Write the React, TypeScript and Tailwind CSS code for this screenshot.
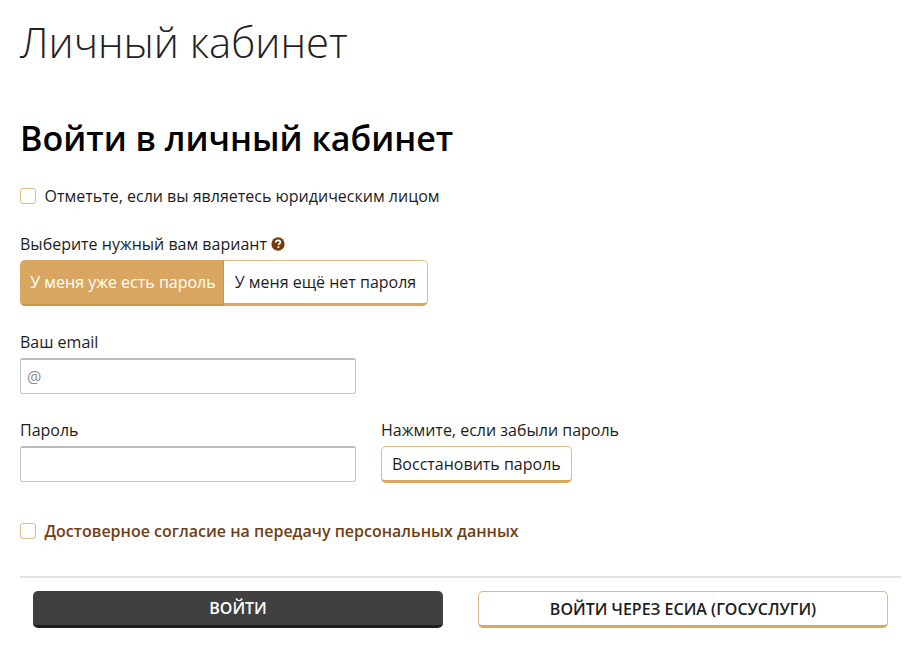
import { useState } from "react";

function Box() {
  return (
    <span className="w-4 h-4 shrink-0 rounded-[3px] border border-[#e0b987] bg-white" />
  );
}

export default function App() {
  const [mode] = useState("has");

  return (
    <div className="w-[923px] h-[660px] overflow-hidden bg-white px-5 font-['Open_Sans','Noto_Sans',sans-serif] text-base text-[#1d1d1d]">
      <h1 className="pt-[13px] text-[41.9px] leading-[57px] font-light text-[#222]">
        Личный кабинет
      </h1>
      <h2 className="mt-[45px] text-[34px] leading-[46px] font-semibold text-black">
        Войти в личный кабинет
      </h2>

      <label className="mt-[24px] flex items-center gap-[8.5px] leading-[22px]">
        <Box />
        Отметьте, если вы являетесь юридическим лицом
      </label>

      <div className="mt-[26px] flex items-center gap-1 leading-[22px]">
        Выберите нужный вам вариант
        <svg viewBox="0 0 16 16" className="w-[14px] h-[14px]">
          <circle cx="8" cy="8" r="7.6" fill="#763c0e" />
          <path
            d="M5.4 6.3c.1-1.6 1.2-2.4 2.7-2.4 1.5 0 2.6.9 2.6 2.1 0 1.8-2.1 1.7-2.1 3.2"
            fill="none"
            stroke="#fff"
            strokeWidth="1.9"
          />
          <rect x="7.5" y="10.5" width="2" height="2" fill="#fff" />
        </svg>
      </div>

      <div className="mt-[5px] flex w-[408px] h-[46px] rounded-[5px] overflow-hidden">
        <div
          className={`w-[204px] pl-[3px] flex items-center justify-center border-b-[2px] border-r border-[#c9924b] ${mode === "has" ? "bg-[#d9a662] text-white" : ""}`}
        >
          У меня уже есть пароль
        </div>
        <div className="flex-1 flex items-center justify-center border border-b-[3px] border-l-0 border-[#e0b987] border-b-[#dba862] rounded-r-[5px]">
          У меня ещё нет пароля
        </div>
      </div>

      <div className="mt-[25px] leading-[22px]">Ваш email</div>
      <input
        placeholder="@"
        className="mt-[5px] block w-[336px] h-[36px] px-[6px] rounded-[3px] border border-[#c4c4c4] border-t-2 border-t-[#bbb] outline-none placeholder:text-[#8a8a8a]"
      />

      <div className="mt-[25px] flex gap-[25px]">
        <div>
          <div className="leading-[22px]">Пароль</div>
          <input className="mt-[5px] block w-[336px] h-[36px] px-[6px] rounded-[3px] border border-[#c4c4c4] border-t-2 border-t-[#bbb] outline-none" />
        </div>
        <div>
          <div className="leading-[22px]">Нажмите, если забыли пароль</div>
          <button className="mt-[5px] h-[37px] px-[10px] rounded-[5px] border border-b-[3px] border-[#e0b987] border-b-[#dba862] bg-white">
            Восстановить пароль
          </button>
        </div>
      </div>

      <label className="mt-[37px] flex items-center gap-[8.5px] leading-[22px] font-semibold text-[#6e3f17]">
        <Box />
        Достоверное согласие на передачу персональных данных
      </label>

      <div className="mt-[34px] w-[881px] border-t-2 border-[#e2e2e2] pt-[13px] flex justify-between px-[13px]">
        <button className="w-[410px] h-[37px] rounded-[5px] bg-[#404040] border-b-[3px] border-[#1f1f1f] text-white font-semibold">
          ВОЙТИ
        </button>
        <button className="w-[410px] h-[37px] rounded-[5px] bg-white border border-b-[3px] border-[#e0b987] border-b-[#dba862] font-semibold text-[#1d1d1d]">
          ВОЙТИ ЧЕРЕЗ ЕСИА (ГОСУСЛУГИ)
        </button>
      </div>
    </div>
  );
}
